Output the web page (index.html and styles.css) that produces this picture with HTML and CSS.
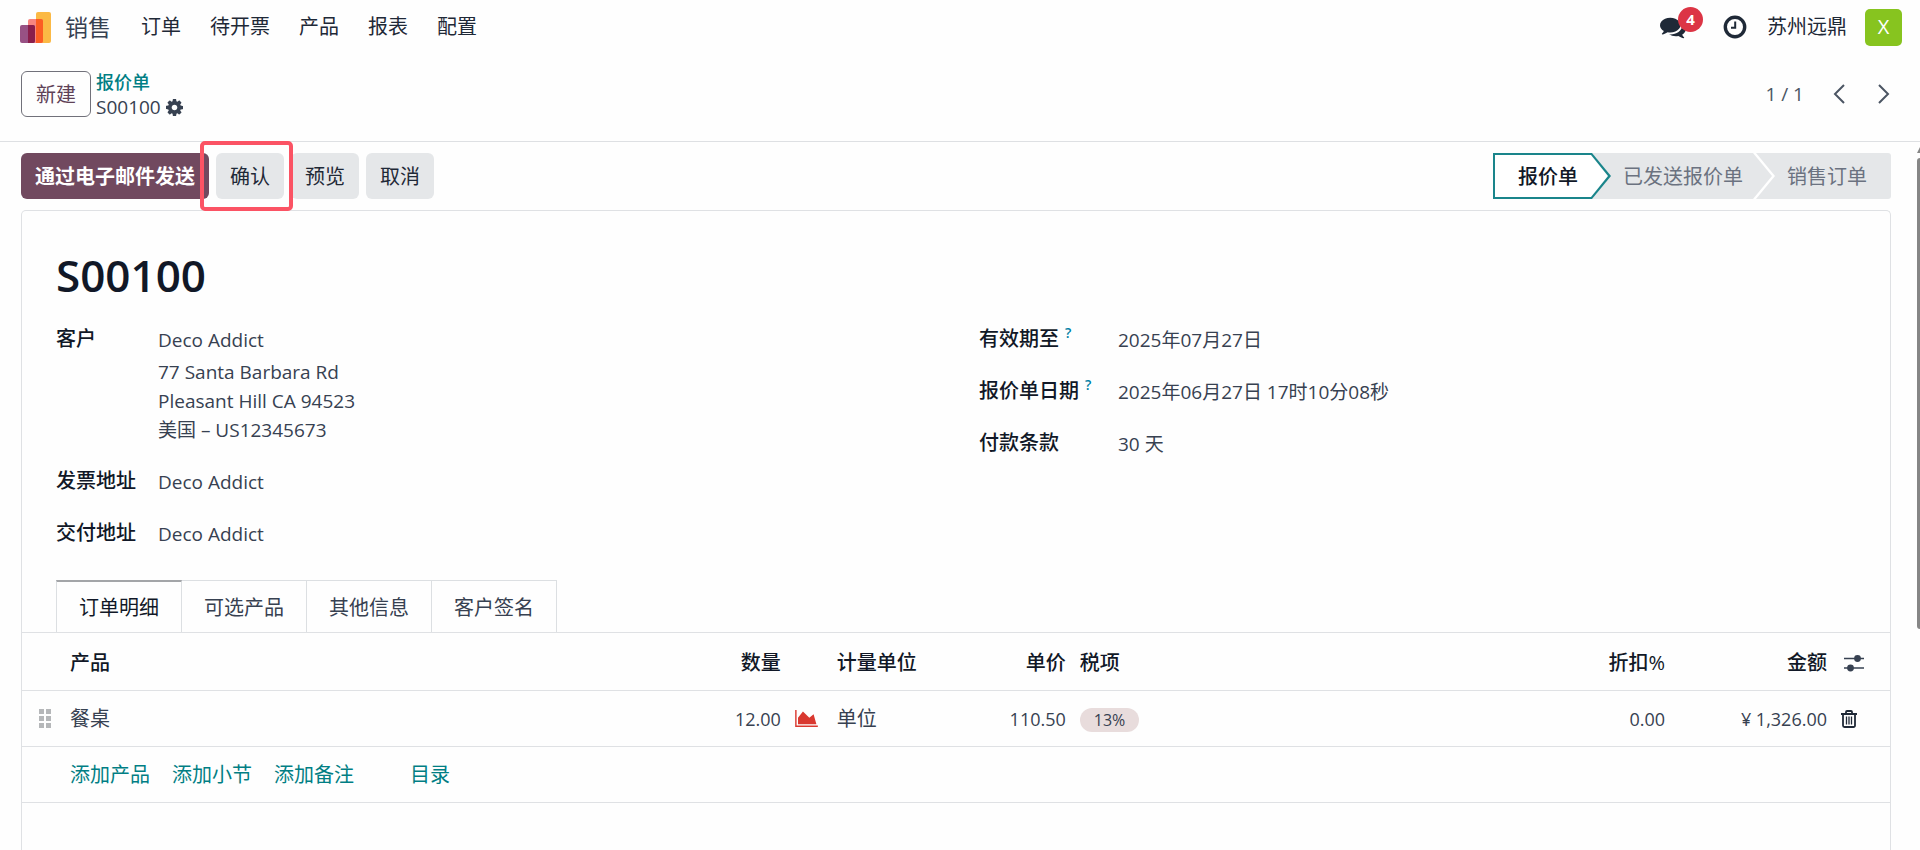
FILE: index.html
```html
<!DOCTYPE html>
<html lang="zh-CN">
<head>
<meta charset="utf-8">
<title>S00100 - 销售</title>
<link rel="stylesheet" href="styles.css">
</head>
<body>
<header class="navbar">
  <a class="brand" href="#">
    <svg class="logo" viewBox="0 0 31 31" aria-hidden="true">
      <rect x="16" y="0" width="15" height="31" rx="2" fill="#fbb945"/>
      <rect x="8" y="7" width="15" height="24" rx="2" fill="#f78580"/>
      <path d="M16 7h5a2 2 0 0 1 2 2v20a2 2 0 0 1-2 2h-5z" fill="#fc5d23"/>
      <rect x="0" y="13" width="15" height="18" rx="2" fill="#985184"/>
      <path d="M8 13h5a2 2 0 0 1 2 2v14a2 2 0 0 1-2 2H8z" fill="#8b1e4b"/>
    </svg>
    <span>销售</span>
  </a>
  <nav class="menu">
    <a href="#">订单</a><a href="#">待开票</a><a href="#">产品</a><a href="#">报表</a><a href="#">配置</a>
  </nav>
  <div class="systray">
    <button class="icon-btn messages" type="button" aria-label="消息">
      <svg viewBox="0 0 1792 1792" width="26" height="26"><path d="M1408 768q0 139-94 257t-256.500 186.500-353.500 68.500q-86 0-176-16-124 88-278 128-36 9-86 16h-3q-11 0-20.500-8t-11.500-21q-1-3-1-6.500t.5-6.500 2-6l2.500-5 3.500-5.500 4-5 4.500-5 4-4.500q5-6 23-25t26-29.500 22.500-29 25-38.500 20.500-44q-124-72-195-177t-71-224q0-139 94-257t256.500-186.500 353.500-68.500 353.500 68.500 256.500 186.500 94 257zm384 256q0 120-71 224.500t-195 176.500q10 24 20.500 44t25 38.500 22.500 29 26 29.500 23 25q1 1 4 4.500t4.500 5 4 5 3.500 5.500l2.500 5 2 6 .5 6.500-1 6.500q-3 14-13 22t-22 7q-50-7-86-16-154-40-278-128-90 16-176 16-271 0-472-132 58 4 88 4 161 0 309-45t264-129q125-92 192-212t67-254q0-77-23-152 129 71 204 178t75 230z"/></svg>
      <span class="count">4</span>
    </button>
    <button class="icon-btn" type="button" aria-label="活动">
      <svg viewBox="0 0 24 24" width="24" height="24"><circle cx="12" cy="12" r="9.700" fill="none" stroke="currentColor" stroke-width="3.400"/><path d="M11.200 6.500h2v7.200H8v-2h3.200z"/></svg>
    </button>
    <span class="company">苏州远鼎</span>
    <button class="avatar" type="button">X</button>
  </div>
</header>

<section class="control-panel">
  <button class="btn btn-outline" type="button">新建</button>
  <div class="breadcrumb">
    <a href="#">报价单</a>
    <div class="current">S00100
      <button class="icon-btn" type="button" aria-label="操作"><svg viewBox="128 128 1536 1536" width="17" height="17"><path d="M1152 896q0-106-75-181t-181-75-181 75-75 181 75 181 181 75 181-75 75-181zm512-109v222q0 12-8 23t-20 13l-185 28q-19 54-39 91 35 50 107 138 10 12 10 25t-9 23q-27 37-99 108t-94 71q-12 0-26-9l-138-108q-44 23-91 38-16 136-29 186-7 28-36 28h-222q-14 0-24.500-8.500t-11.500-21.500l-28-184q-49-16-90-37l-141 107q-10 9-25 9-14 0-25-11-126-114-165-168-7-10-7-23 0-12 8-23 15-21 51-66.500t54-70.500q-27-50-41-99l-183-27q-13-2-21-12.500t-8-23.500v-222q0-12 8-23t19-13l186-28q14-46 39-92-40-57-107-138-10-12-10-24 0-10 9-23 26-36 98.500-107.500t94.500-71.500q13 0 26 10l138 107q44-23 91-38 16-136 29-186 7-28 36-28h222q14 0 24.500 8.500t11.500 21.500l28 184q49 16 90 37l142-107q9-9 24-9 13 0 25 10 129 119 165 170 7 8 7 22 0 12-8 23-15 21-51 66.500t-54 70.500q26 50 41 98l183 28q13 2 21 12.500t8 23.500z"/></svg></button>
    </div>
  </div>
  <div class="pager">
    <span>1 / 1</span>
    <button class="icon-btn" type="button" aria-label="上一个"><svg viewBox="0 0 12 20" width="12" height="20"><path d="M11 1 2 10l9 9" fill="none" stroke="currentColor" stroke-width="2"/></svg></button>
    <button class="icon-btn" type="button" aria-label="下一个"><svg viewBox="0 0 12 20" width="12" height="20"><path d="m1 1 9 9-9 9" fill="none" stroke="currentColor" stroke-width="2"/></svg></button>
  </div>
</section>

<main class="content">
  <svg class="scrollbar" viewBox="0 0 3 482" width="3" height="482" aria-hidden="true"><path d="M3 0v6H0zM3 11v471a3 3 0 0 1-3-3V14a3 3 0 0 1 3-3z"/></svg>
  <div class="statusbar">
    <div class="actions">
      <button class="btn btn-primary" type="button">通过电子邮件发送</button>
      <button class="btn btn-secondary highlighted" type="button">确认</button>
      <button class="btn btn-secondary" type="button">预览</button>
      <button class="btn btn-secondary" type="button">取消</button>
    </div>
    <div class="stages">
      <button class="stage active" type="button"><span>报价单</span></button>
      <button class="stage" type="button"><span>已发送报价单</span></button>
      <button class="stage last" type="button"><span>销售订单</span></button>
    </div>
  </div>

  <article class="sheet">
    <h1>S00100</h1>
    <div class="fields">
      <dl class="group group-left">
        <dt>客户</dt>
        <dd>Deco Addict
          <div class="address">77 Santa Barbara Rd<br>Pleasant Hill CA 94523<br>美国 – US12345673</div>
        </dd>
        <dt>发票地址</dt><dd>Deco Addict</dd>
        <dt>交付地址</dt><dd>Deco Addict</dd>
      </dl>
      <dl class="group group-right">
        <dt>有效期至<sup>?</sup></dt><dd>2025年07月27日</dd>
        <dt>报价单日期<sup>?</sup></dt><dd>2025年06月27日 17时10分08秒</dd>
        <dt>付款条款</dt><dd>30 天</dd>
      </dl>
    </div>

    <div class="tabs" role="tablist">
      <button class="tab selected" type="button" role="tab" aria-selected="true">订单明细</button>
      <button class="tab" type="button" role="tab">可选产品</button>
      <button class="tab" type="button" role="tab">其他信息</button>
      <button class="tab" type="button" role="tab">客户签名</button>
    </div>

    <table class="lines">
      <colgroup>
        <col class="col-handle"><col class="col-product"><col class="col-qty"><col class="col-chart"><col class="col-uom"><col class="col-price"><col><col class="col-discount"><col class="col-amount"><col class="col-tools">
      </colgroup>
      <thead>
        <tr>
          <th></th><th>产品</th><th class="num">数量</th><th></th><th>计量单位</th><th class="num">单价</th><th>税项</th><th class="num">折扣%</th><th class="num">金额</th>
          <th class="tools"><button class="icon-btn" type="button" aria-label="可选列"><svg viewBox="0 0 20 18" width="20" height="18"><path d="M0 4.500h20M0 14h20" stroke="currentColor" stroke-width="1.500"/><circle cx="13.500" cy="4.500" r="3.400"/><circle cx="6.500" cy="14" r="3.400"/></svg></button></th>
        </tr>
      </thead>
      <tbody>
        <tr>
          <td class="handle"><svg viewBox="0 0 12 19" width="12" height="19"><path d="M0 0h5v5H0zM7 0h5v5H7zM0 7h5v5H0zM7 7h5v5H7zM0 14h5v5H0zM7 14h5v5H7z"/></svg></td>
          <td class="cjk">餐桌</td>
          <td class="num">12.00</td>
          <td><svg class="chart" viewBox="0 128 2048 1536" width="23" height="17"><path d="M2048 1536v128h-2048v-1536h128v1408h1920zm-384-1024l256 896h-1664v-576l448-576 576 576z"/></svg></td>
          <td class="cjk">单位</td>
          <td class="num">110.50</td>
          <td><span class="tag">13%</span></td>
          <td class="num">0.00</td>
          <td class="num">¥ 1,326.00</td>
          <td><button class="icon-btn trash" type="button" aria-label="删除"><svg viewBox="0 0 16 18" width="16" height="18"><g fill="none" stroke="currentColor"><path d="M0 4h16M2 4v11.500a1.500 1.500 0 0 0 1.500 1.500h9a1.500 1.500 0 0 0 1.500-1.500V4M5 4V2a1 1 0 0 1 1-1h4a1 1 0 0 1 1 1v2" stroke-width="1.800"/><path d="M5.500 6.500v8M8 6.500v8M10.500 6.500v8" stroke-width="1.300"/></g></svg></button></td>
        </tr>
        <tr>
          <td></td>
          <td colspan="9"><div class="add-links"><a href="#">添加产品</a><a href="#">添加小节</a><a href="#">添加备注</a><a class="catalog" href="#">目录</a></div></td>
        </tr>
      </tbody>
    </table>
  </article>
</main>
</body>
</html>
```
FILE: styles.css
```css
* { box-sizing: border-box; }

body {
  margin: 0;
  min-height: 100vh;
  display: flex;
  flex-direction: column;
  background: #fefefe;
  color: #374151;
  font-family: "Open Sans", "Noto Sans CJK SC", sans-serif;
  font-size: 20px;
  line-height: 30px;
}

a { color: inherit; text-decoration: none; }
button { font: inherit; color: inherit; border: 0; padding: 0; background: none; cursor: pointer; }
svg { display: block; fill: currentColor; }

.icon-btn { display: flex; position: relative; }

/* Top navigation */
.navbar { display: flex; align-items: center; height: 54px; padding: 0 18px 0 20px; color: #1f2937; }
.brand { display: flex; align-items: center; gap: 14px; font-size: 23px; color: #374151; }
.logo { width: 31px; height: 31px; }
.menu { display: flex; gap: 29px; margin-left: 30px; }
.systray { display: flex; align-items: center; margin-left: auto; }
.messages { margin-right: 37px; }
.count {
  position: absolute; left: 18px; top: -7px;
  width: 25px; height: 25px; border-radius: 13px;
  background: #dc3545; color: #fff;
  font-size: 15px; font-weight: 700; line-height: 25px; text-align: center;
}
.company { margin: 0 18px 0 20px; }
.avatar { width: 37px; height: 37px; border-radius: 5px; background: #87c41f; color: #fff; font-size: 20px; }

/* Breadcrumb and pager */
.control-panel { display: flex; align-items: center; height: 88px; padding: 0 30px 8px 21px; border-bottom: 1px solid #dee0e3; }
.btn { height: 46px; padding: 2px 14px 0; border-radius: 6px; color: #374151; white-space: nowrap; }
.btn-outline { border: 1px solid #71717a; color: #5f4257; }
.btn-primary { background: #71495f; color: #fff; font-weight: 700; }
.btn-secondary { background: #e5e7e9; color: #1f2937; }
.breadcrumb { margin-left: 5px; padding-top: 2px; font-size: 19px; line-height: 25px; }
.breadcrumb a { display: block; color: #017e84; font-size: 18px; font-weight: 500; }
.current { display: flex; align-items: center; gap: 5px; }
.pager { display: flex; align-items: center; gap: 33px; margin-left: auto; font-size: 19px; color: #4b5563; }
.pager span { margin-right: -4px; }

/* Form status bar */
.content { position: relative; flex: 1; display: flex; flex-direction: column; padding: 11px 29px 0 21px; }
.scrollbar { position: absolute; top: 5px; right: 0; color: #868686; }
.statusbar { display: flex; justify-content: space-between; margin-bottom: 11px; }
.actions { display: flex; gap: 7px; }
.highlighted { position: relative; z-index: 1; }
.highlighted::after { content: ""; position: absolute; inset: -12px -9px -12px -16px; border: 4px solid #fb5364; border-radius: 5px; }
.stages { display: flex; }
.stage {
  position: relative; z-index: 1;
  height: 46px; margin-right: -19px; padding: 2px 32px 0 31px;
  background: #fff; color: #6b7280;
  clip-path: polygon(0 0, calc(100% - 19px) 0, 100% 50%, calc(100% - 19px) 100%, 0 100%);
}
.stage::before {
  content: ""; position: absolute; inset: 0 3px 0 0; background: #e5e7e9;
  clip-path: polygon(0 0, calc(100% - 19px) 0, 100% 50%, calc(100% - 19px) 100%, 0 100%);
}
.stage span { position: relative; }
.stage.active { z-index: 2; padding: 2px 33px 0 25px; background: #1a858b; color: #111827; font-weight: 500; }
.stage.active::before { inset: 2px 3px 2px 2px; background: #fff; clip-path: polygon(0 0, calc(100% - 17px) 0, 100% 50%, calc(100% - 17px) 100%, 0 100%); }
.stage.last { z-index: 0; margin-right: 0; padding: 2px 24px 0 31px; background: #e5e7e9; border-radius: 0 3px 3px 0; clip-path: none; }
.stage.last::before { display: none; }

/* Sheet */
.sheet { flex: 1; border: 1px solid #dfe1e4; border-bottom: 0; border-radius: 5px 5px 0 0; }
h1 { margin: 34px 34px 0; color: #111827; font-size: 44px; font-weight: 600; line-height: 60px; }
.fields { display: grid; grid-template-columns: 1fr 1fr; gap: 0 46px; padding: 19px 34px 0; }
.group { display: grid; align-content: start; row-gap: 21px; margin: 0; }
.group-left { grid-template-columns: 102px 1fr; }
.group-right { grid-template-columns: 139px 1fr; }
dt { color: #111827; font-weight: 500; white-space: nowrap; }
dd { margin: 0; padding-top: 1px; font-size: 19px; }
sup { margin-left: 6px; color: #0180a5; font-size: 14px; font-weight: 600; line-height: 0; }
.address { padding: 3px 0 0; line-height: 29px; }

/* Notebook tabs */
.tabs { display: flex; margin: 31px 34px 0; }
.tab { height: 52px; padding: 2px 22px 0; border: 1px solid #dcdfe2; border-width: 1px 1px 0 0; }
.tab.selected { padding-top: 1px; border-left-width: 1px; border-top: 2px solid #a3a5a8; color: #111827; }

/* Order lines */
.lines { width: 100%; table-layout: fixed; border-collapse: collapse; border-top: 1px solid #dfe1e4; }
.lines tr { height: 56px; border-bottom: 1px solid #dfe1e4; }
.lines thead tr { height: 58px; }
th, td { padding: 0 7px; text-align: left; white-space: nowrap; }
th { padding-top: 2px; color: #111827; font-weight: 500; }
td { font-size: 18px; }
td.cjk { font-size: 20px; }
.num { text-align: right; }
.col-handle { width: 41px; }
.col-product { width: 35%; }
.col-qty { width: 71px; }
.col-chart { width: 42px; }
.col-uom { width: 143px; }
.col-price { width: 100px; }
.col-discount { width: 100px; }
.col-amount { width: 162px; }
.col-tools { width: 56px; }
.handle { padding-left: 17px; color: #b5b7b9; }
.chart { color: #d9382f; }
.tools { padding-left: 10px; color: #374151; }
.trash { color: #1f2937; }
.tag { display: inline-block; padding: 0 14px; border-radius: 12px; background: #e8dcdc; font-size: 16px; line-height: 24px; font-weight: 500; }
.add-links { display: flex; gap: 22px; padding-top: 1px; color: #017e84; font-size: 20px; }
.catalog { margin-left: 34px; }
```
